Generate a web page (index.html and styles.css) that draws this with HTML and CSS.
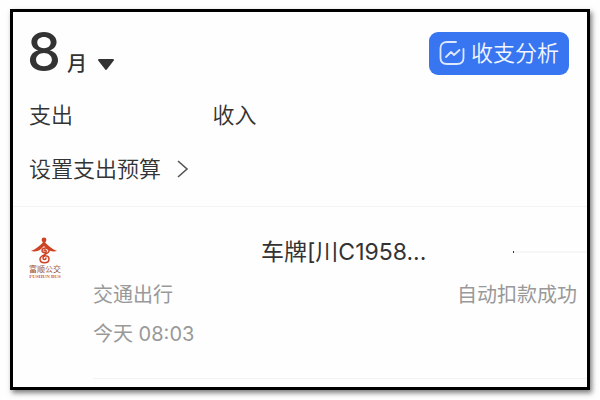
FILE: index.html
```
<!DOCTYPE html>
<html lang="zh-CN">

<head>
  <meta charset="UTF-8">
  <meta name="viewport" content="width=device-width, initial-scale=1.0">
  <title>账单</title>
  <link rel="stylesheet" href="styles.css">
</head>

<body>
  <main class="card">
    <section class="summary">
      <div class="header">
        <button class="month" type="button">
          <span class="month-number">8</span>
          <span class="month-unit">月</span>
          <svg class="caret" width="18" height="12" viewBox="0 0 18 12" aria-hidden="true">
            <path d="M2 1h14L9 10z" fill="#333" stroke="#333" stroke-width="2" stroke-linejoin="round" />
          </svg>
        </button>
        <button class="btn-analysis" type="button">
          <svg width="26" height="26" viewBox="0 0 26 26" fill="none" stroke="#dce8ff" stroke-width="1.800" stroke-linecap="round" stroke-linejoin="round" aria-hidden="true">
            <path d="M17 2H8C4 2 1.500 4.500 1.500 8V18C1.500 22 4 24 8 24H18C22 24 24.500 22 24.500 18V9" />
            <path d="M7 17l5-5 3 3 5.500-5" />
          </svg>
          收支分析
        </button>
      </div>
      <div class="totals">
        <span>支出</span>
        <span>收入</span>
      </div>
      <a class="budget" href="#">
        设置支出预算
        <svg width="12" height="20" viewBox="0 0 12 20" fill="none" stroke="#555" stroke-width="1.600" aria-hidden="true">
          <path d="M1 2l9 8-9 8" />
        </svg>
      </a>
    </section>

    <section class="bill">
      <svg class="logo" width="36" height="44" viewBox="0 0 36 44" role="img" aria-label="富顺公交">
        <circle cx="15" cy="4" r="2.400" fill="#cf4325" />
        <path d="M15 5C12 9 7 13 2 15c4 1 8 0 10-2l3-3 3 3c2 2 6 3 10 2C23 13 18 9 15 5z" fill="#cf4325" />
        <path d="M15 15c0-2 3-1 2 1-1 1-4 1-4-1 0-4 7-4 7 0 0 3-9 4-9 8 0 5 9 5 9 0 0-4-6-4-6-1 0 2 3 2 3 0" fill="none" stroke="#cf4325" stroke-width="1.500" stroke-linecap="round" />
        <text class="logo-name" x="16" y="36" text-anchor="middle">富顺公交</text>
        <text class="logo-latin" x="16" y="42" text-anchor="middle">FUSHUN BUS</text>
      </svg>
      <div class="bill-body">
        <div class="bill-head">
          <span class="bill-title">车牌[川C1958...</span>
          <span class="bill-rule"></span>
        </div>
        <div class="bill-row">
          <span>交通出行</span>
          <span class="bill-status">自动扣款成功</span>
        </div>
        <div class="bill-time">今天 08:03</div>
      </div>
    </section>
  </main>
</body>

</html>
```
FILE: styles.css
```
* {
  box-sizing: border-box;
  margin: 0;
  padding: 0;
}

body {
  padding: 9px 10px;
  background-color: #fefefe;
  color: #333;
  font-family: Inter, "Noto Sans CJK SC", sans-serif;
  font-size: 22px;
  font-weight: 400;
  line-height: 32px;
}

button {
  border: none;
  background: none;
  color: inherit;
  font: inherit;
  cursor: pointer;
}

.card {
  border: 3px solid #000;
  background-color: #fefefe;
  box-shadow: 2px 3px 5px rgba(0, 0, 0, 0.5);
}

.summary {
  padding: 14px 18px 21px 16px;
  border-bottom: 1px solid #f3f3f3;
}

.header {
  display: flex;
  justify-content: space-between;
  align-items: center;
}

.month {
  display: flex;
  align-items: baseline;
  gap: 6px;
  margin-left: -2px;
}

.month-number {
  font-size: 54px;
  font-weight: 500;
  line-height: 52px;
}

.month-unit {
  font-size: 20px;
  font-weight: 500;
}

.caret {
  margin-left: 4px;
}

.btn-analysis {
  display: flex;
  align-items: center;
  gap: 6px;
  height: 43px;
  padding: 0 10px;
  border-radius: 9px;
  background-color: #3875f1;
  color: #f2f7ff;
  font-weight: 350;
}

.totals {
  display: grid;
  grid-template-columns: 34% 1fr;
  margin-top: 19px;
  font-weight: 350;
}

.budget {
  display: flex;
  align-items: center;
  gap: 16px;
  margin-top: 22px;
  color: inherit;
  font-weight: 350;
  text-decoration: none;
}

.bill {
  display: flex;
  gap: 28px;
  padding: 29px 0 8px 16px;
}

.logo {
  flex: none;
}

.logo-name {
  fill: #96503c;
  font-family: "Noto Sans CJK SC", sans-serif;
  font-size: 8px;
}

.logo-latin {
  fill: #d0614a;
  font-family: "Liberation Serif", serif;
  font-size: 5px;
  font-weight: 700;
}

.bill-body {
  flex: 1;
  padding-bottom: 28px;
  border-bottom: 1px solid #f3f3f3;
  color: #999;
  font-size: 20px;
}

.bill-head {
  display: flex;
  justify-content: space-between;
  align-items: center;
  padding-left: 34%;
}

.bill-title {
  color: #333;
  font-size: 23px;
}

/* faint rule with a short dark tick at its start */
.bill-rule {
  width: 74px;
  height: 2px;
  border-left: 1px solid #333;
  background-color: #f7f7f7;
}

.bill-row {
  display: flex;
  justify-content: space-between;
  margin-top: 11px;
  padding-right: 10px;
}

.bill-time {
  margin-top: 7px;
}
```
